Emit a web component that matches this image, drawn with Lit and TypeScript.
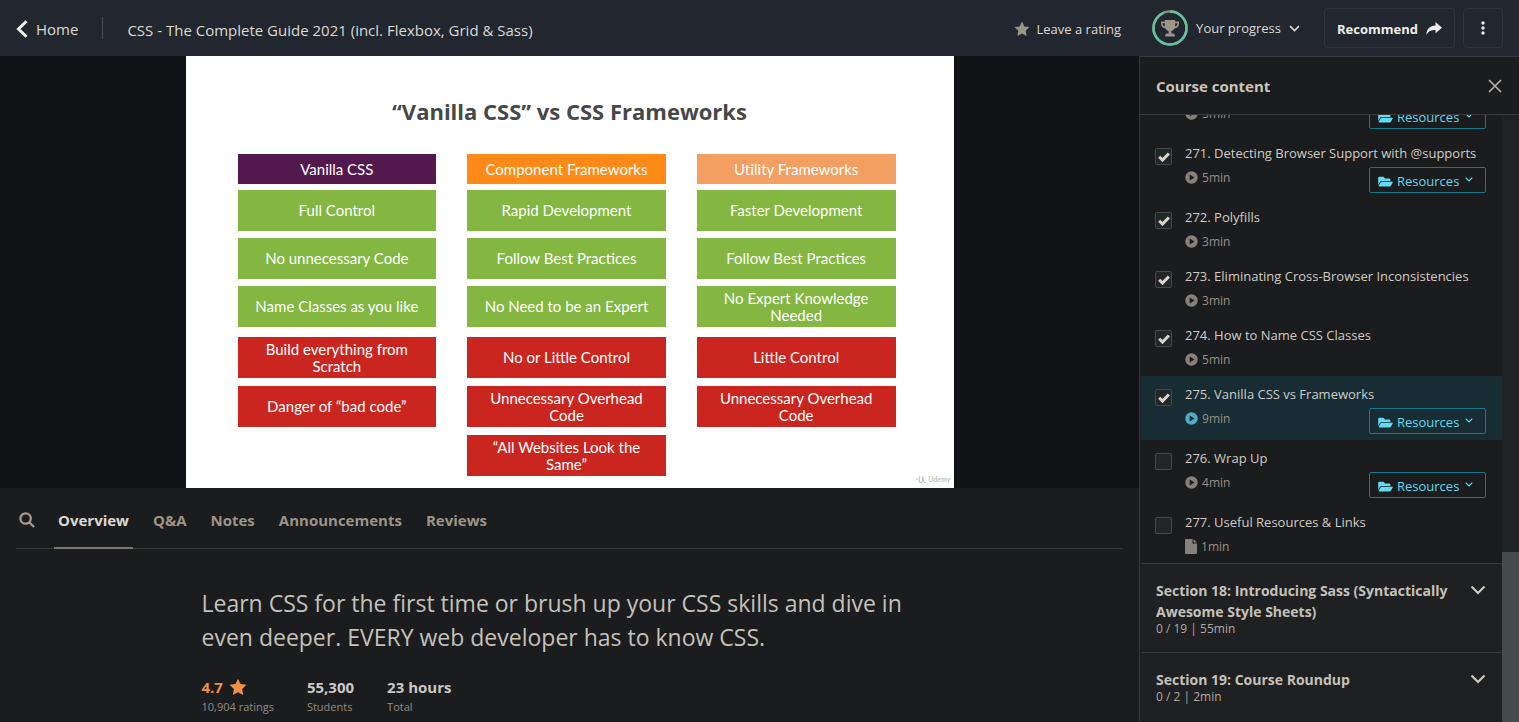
import { LitElement, html, css, svg, nothing } from "lit";
import { customElement, state, query } from "lit/decorators.js";
import { classMap } from "lit/directives/class-map.js";

interface Lecture {
  id: number;
  title?: string;
  minutes: number;
  done: boolean;
  resources?: boolean;
  article?: boolean;
}

const icon = (cls: string, box: string, body: unknown) =>
  html`<svg class=${cls} viewBox=${box} aria-hidden="true">${body}</svg>`;

const STAR = svg`<path fill="currentColor" d="M8 .6l2.3 4.8 5.2.7-3.8 3.7.9 5.3L8 12.6l-4.6 2.5.9-5.3L.5 6.1l5.2-.7z"/>`;
const chevron = (cls: string) =>
  icon(cls, "0 0 16 10", svg`<path fill="none" stroke="currentColor" stroke-width="2.2" d="M1.500 1.500L8 8l6.500-6.500"/>`);
const playIcon = () =>
  icon("play", "0 0 14 14", svg`<path fill="currentColor" fill-rule="evenodd" d="M7 .3a6.700 6.700 0 1 1 0 13.400a6.700 6.700 0 0 1 0-13.400zM5 3.900v6.200L10.300 7z"/>`);
const fileIcon = () =>
  icon("file", "0 0 12 15", svg`<path fill="currentColor" d="M0 1a1 1 0 0 1 1-1h6.500v4.500H12V14a1 1 0 0 1-1 1H1a1 1 0 0 1-1-1zM8.500 0L12 3.500H8.500z"/>`);
const folderIcon = () =>
  icon("folder", "0 0 576 512", svg`<path fill="currentColor" d="M573 295l-73 124a48 48 0 0 1-41 29H45c-18 0-30-20-20-36l73-124a48 48 0 0 1 41-24h414c18 0 29 20 20 31zM139 232h341v-48a48 48 0 0 0-48-48H272l-64-64H48a48 48 0 0 0-48 48v278l70-119a80 80 0 0 1 69-47z"/>`);

@customElement("app-root")
export class AppRoot extends LitElement {
  static styles = css`
    :host {
      display: block;
      font-family: "Open Sans", "Noto Sans", sans-serif;
      font-size: 13px;
      line-height: 20px;
      color: #dcd9d3;
      background: #1a1c1d;
    }
    * { box-sizing: border-box; }
    svg { display: block; flex: none; }
    h1, h2, h3, p, ul { margin: 0; padding: 0; }
    ul { list-style: none; }
    button { font: inherit; color: inherit; background: none; border: 0; padding: 0; cursor: pointer; }
    a { color: inherit; text-decoration: none; }

    .page { display: flex; flex-direction: column; height: 100vh; overflow: hidden; }

    .topbar {
      display: flex; align-items: center; flex: none; height: 56px;
      padding: 0 16px; background: #22272f; white-space: nowrap;
    }
    .home { display: flex; align-items: center; gap: 8px; padding-top: 2px; font-size: 15px; }
    .home-arrow { width: 12px; height: 18px; color: #efede9; }
    .divider { width: 1px; height: 22px; margin: 0 24px; background: #4a4e52; }
    .course { flex: 1; font-size: 15px; font-weight: 400; overflow: hidden; text-overflow: ellipsis; padding-top: 4px; }
    .rate { display: flex; align-items: center; gap: 7px; margin-right: 31px; padding-top: 2px; }
    .rate-star { width: 16px; height: 16px; color: #9d9588; }
    .progress { display: flex; align-items: center; gap: 8px; margin-right: 24px; }
    .ring { width: 36px; height: 36px; }
    .caret { width: 11px; height: 7px; }
    .boxed {
      display: flex; align-items: center; justify-content: center; gap: 8px;
      height: 40px; border: 1px solid #2e343b; border-radius: 4px;
      font-weight: 700; color: #efede9;
    }
    .recommend { padding: 2px 12px 0; margin-right: 8px; }
    .share { width: 16px; height: 14px; }
    .more { width: 40px; }
    .dots { width: 4px; height: 14px; }

    .body { display: flex; flex: 1; min-height: 0; }
    .main { flex: 1; min-width: 0; overflow: hidden; }

    .stage { display: flex; justify-content: center; background: #101215; }
    .slide {
      position: relative; width: 100%; max-width: 768px; aspect-ratio: 16 / 9;
      background: #fff; font-family: Lato, "Open Sans", sans-serif; font-size: 15px; line-height: 17px;
    }
    .slide-title {
      padding: 38px 0 26px; text-align: center; color: #474747;
      font-family: "Open Sans", "Noto Sans", sans-serif; font-size: 22px; line-height: 34px; font-weight: 700;
    }
    .columns { display: grid; grid-template-columns: repeat(3, 1fr); gap: 31px; padding: 0 58px 0 52px; color: #fff; }
    .col { display: flex; flex-direction: column; }
    .cell { display: flex; align-items: center; justify-content: center; text-align: center; height: 41px; padding: 0 16px; }
    .head { height: 30px; margin-bottom: 6px; font-weight: 400; font-size: 15px; }
    .vanilla { background: #53184c; }
    .component { background: #ff8a18; }
    .utility { background: #f39f62; }
    .pros { display: grid; gap: 7px; margin-bottom: 10px; }
    .pros .cell { background: #83b741; }
    .cons { display: grid; gap: 8px; }
    .cons .cell { background: #ca261f; }
    .mark { position: absolute; right: 3px; bottom: 4px; display: flex; align-items: center; gap: 2px; color: #c4c4c4; font-size: 7px; line-height: 10px; font-weight: 700; }
    .mark-logo { width: 10px; height: 9px; }

    .tabs { display: flex; gap: 16px; height: 61px; margin: 0 16px; border-bottom: 1px solid #3a3a35; }
    .search { width: 22px; display: grid; place-items: center; padding-top: 4px; }
    .search-icon { width: 16px; height: 16px; color: #a39b8e; }
    .tab { height: 61px; padding: 4px 4px 0; font-size: 15px; font-weight: 700; color: #9c9487; border-bottom: 2px solid transparent; }
    .tab.active { color: #dcd9d3; border-bottom-color: #7d766b; }

    .about { max-width: 736px; margin: 37px auto 0; }
    .lead { font-size: 23px; line-height: 34px; font-weight: 400; color: #c5c1b9; }
    .stats { display: flex; gap: 33px; margin-top: 23px; }
    .stat-value { display: flex; align-items: center; gap: 6px; font-size: 15px; line-height: 20px; font-weight: 700; color: #cdc9c2; }
    .stat-label { font-size: 11px; line-height: 20px; color: #948c80; }
    .orange { color: #ec9244; }
    .stat-star { width: 18px; height: 18px; }

    .side { display: flex; flex-direction: column; width: 380px; flex: none; border-left: 1px solid #373b3d; }
    .side-head {
      display: flex; align-items: center; justify-content: space-between; flex: none; height: 59px;
      padding: 0 17px 0 16px; border-top: 1px solid #373b3d; border-bottom: 1px solid #373b3d;
    }
    .side-title { font-size: 15px; font-weight: 700; color: #c9c5bd; }
    .close { width: 14px; height: 14px; color: #b5aea2; }
    .side-body { display: flex; flex: 1; min-height: 0; }
    .scroller { flex: 1; min-width: 0; overflow-y: auto; scrollbar-width: none; padding-left: 1px; }
    .track { display: flex; flex-direction: column; justify-content: flex-end; width: 17px; background: #1f2324; }
    .thumb { height: 170px; background: #454a4d; }

    .item { display: flex; gap: 13px; padding: 8px 16px 6px 14px; }
    .item.current { background: #172d33; }
    .tick { display: grid; flex: none; width: 17px; height: 17px; margin-top: 5px; }
    .box {
      appearance: none; grid-area: 1 / 1; width: 17px; height: 17px; margin: 0;
      background: #212627; border: 1px solid #43484a; border-radius: 2px; cursor: pointer;
    }
    .check { grid-area: 1 / 1; place-self: center; width: 12px; height: 10px; color: #d8d4cd; pointer-events: none; }
    .info { flex: 1; min-width: 0; }
    .name { display: block; min-height: 20px; margin-bottom: 4px; white-space: nowrap; color: #d0ccc5; }
    .meta { display: flex; justify-content: space-between; align-items: flex-start; }
    .time { display: flex; align-items: center; gap: 4px; font-size: 12px; line-height: 21px; color: #989084; }
    .play { width: 13px; height: 13px; color: #88817a; }
    .file { width: 12px; height: 15px; color: #88817a; }
    .current .play { color: #4eadc2; }
    .res {
      display: flex; align-items: center; width: 117px; height: 26px; padding: 2px 0 0 8px;
      border: 1px solid #147a8c; border-radius: 2px; color: #63daf2;
    }
    .folder { width: 15px; height: 13px; margin-right: 4px; }
    .res-caret { width: 8px; height: 5px; margin: 0 0 3px 6px; }

    .section { display: flex; align-items: flex-start; width: 100%; padding: 16px 16px 16px 15px; border-top: 1px solid #373b3d; background: #1e2021; text-align: left; }
    .section:last-child { padding-bottom: 24px; }
    .section-text { flex: 1; }
    .section-name { display: block; font-size: 14px; line-height: 21px; font-weight: 700; color: #c5c1b9; }
    .section-sub { display: block; font-size: 12px; line-height: 14px; color: #b0aaa0; }
    .section-caret { width: 16px; height: 10px; margin-top: 5px; color: #cdc9c2; }
  `;

  @state() private tab = "Overview";
  @state() private lectures: Lecture[] = [
    { id: 270, minutes: 5, done: true, resources: true },
    { id: 271, title: "Detecting Browser Support with @supports", minutes: 5, done: true, resources: true },
    { id: 272, title: "Polyfills", minutes: 3, done: true },
    { id: 273, title: "Eliminating Cross-Browser Inconsistencies", minutes: 3, done: true },
    { id: 274, title: "How to Name CSS Classes", minutes: 5, done: true },
    { id: 275, title: "Vanilla CSS vs Frameworks", minutes: 9, done: true, resources: true },
    { id: 276, title: "Wrap Up", minutes: 4, done: false, resources: true },
    { id: 277, title: "Useful Resources & Links", minutes: 1, done: false, article: true },
  ];
  @query(".scroller") private scroller!: HTMLElement;

  private readonly tabs = ["Overview", "Q&A", "Notes", "Announcements", "Reviews"];
  private readonly columns = [
    { cls: "vanilla", head: "Vanilla CSS", pros: ["Full Control", "No unnecessary Code", "Name Classes as you like"], cons: ["Build everything from Scratch", "Danger of “bad code”"] },
    { cls: "component", head: "Component Frameworks", pros: ["Rapid Development", "Follow Best Practices", "No Need to be an Expert"], cons: ["No or Little Control", "Unnecessary Overhead Code", "“All Websites Look the Same”"] },
    { cls: "utility", head: "Utility Frameworks", pros: ["Faster Development", "Follow Best Practices", "No Expert Knowledge Needed"], cons: ["Little Control", "Unnecessary Overhead Code"] },
  ];
  private readonly sections = [
    { name: "Section 18: Introducing Sass (Syntactically Awesome Style Sheets)", sub: "0 / 19 | 55min" },
    { name: "Section 19: Course Roundup", sub: "0 / 2 | 2min" },
  ];

  firstUpdated() {
    this.scroller.scrollTop = 44;
  }

  private toggle(id: number) {
    this.lectures = this.lectures.map((l) => (l.id === id ? { ...l, done: !l.done } : l));
  }

  private renderLecture(l: Lecture) {
    return html`<li class=${classMap({ item: true, current: l.id === 275 })}>
      <span class="tick">
        <input class="box" type="checkbox" id="l${l.id}" .checked=${l.done} @change=${() => this.toggle(l.id)} />
        ${l.done
          ? icon("check", "0 0 12 10", svg`<path fill="none" stroke="currentColor" stroke-width="3" d="M1.200 4.800l3.300 3.300L10.900 1.500"/>`)
          : nothing}
      </span>
      <div class="info">
        <label class="name" for="l${l.id}">${l.title ? `${l.id}. ${l.title}` : nothing}</label>
        <div class="meta">
          <span class="time">${l.article ? fileIcon() : playIcon()}${l.minutes}min</span>
          ${l.resources ? html`<button class="res">${folderIcon()}Resources${chevron("res-caret")}</button>` : nothing}
        </div>
      </div>
    </li>`;
  }

  render() {
    return html`<div class="page">
      <header class="topbar">
        <a class="home" href="#home">
          ${icon("home-arrow", "0 0 12 18", svg`<path fill="none" stroke="currentColor" stroke-width="3" d="M10.500 1.200L2.500 9l8 7.800"/>`)}Home
        </a>
        <span class="divider"></span>
        <h1 class="course">CSS - The Complete Guide 2021 (incl. Flexbox, Grid &amp; Sass)</h1>
        <button class="rate">${icon("rate-star", "0 0 16 16", STAR)}Leave a rating</button>
        <button class="progress">
          ${icon("ring", "0 0 36 36", svg`
            <circle cx="18" cy="18" r="16.500" fill="none" stroke="#8f877b" stroke-width="2.500"/>
            <circle cx="18" cy="18" r="16.500" fill="none" stroke="#62c39c" stroke-width="2.500" pathLength="100" stroke-dasharray="94 6" transform="rotate(-90 18 18)"/>
            <path fill="#9d9588" d="M12.800 10h10.400v1.600H27v2.200c0 2.600-2 4.400-4.500 4.700-.8 1.400-1.900 2.300-3.100 2.600v2.500h1.400c1.300 0 2 .8 2 2v.9h-9.600v-.9c0-1.200.7-2 2-2h1.400v-2.500c-1.200-.3-2.300-1.200-3.100-2.600C11 18.200 9 16.400 9 13.800v-2.200h3.800zm0 3.200h-2.200v.6c0 1.300.8 2.300 2.300 2.800-.1-1-.1-2.200-.1-3.400zm10.400 0c0 1.200 0 2.400-.1 3.400 1.500-.5 2.300-1.500 2.300-2.800v-.6z"/>`)}
          Your progress ${chevron("caret")}
        </button>
        <button class="boxed recommend">
          Recommend ${icon("share", "0 0 16 14", svg`<path fill="currentColor" d="M9.500 0L16 5.700 9.500 11.200V8C5.200 8 2.200 9.300.5 13 .2 7.500 3.700 3.600 9.500 3.400z"/>`)}
        </button>
        <button class="boxed more" aria-label="More options">
          ${icon("dots", "0 0 4 14", svg`<g fill="currentColor"><circle cx="2" cy="2" r="1.700"/><circle cx="2" cy="7" r="1.700"/><circle cx="2" cy="12" r="1.700"/></g>`)}
        </button>
      </header>

      <div class="body">
        <main class="main">
          <section class="stage">
            <div class="slide">
              <h2 class="slide-title">“Vanilla CSS” vs CSS Frameworks</h2>
              <div class="columns">
                ${this.columns.map((c) => html`<div class="col">
                  <h3 class="cell head ${c.cls}">${c.head}</h3>
                  <div class="pros">${c.pros.map((t) => html`<div class="cell">${t}</div>`)}</div>
                  <div class="cons">${c.cons.map((t) => html`<div class="cell">${t}</div>`)}</div>
                </div>`)}
              </div>
              <div class="mark">
                ${icon("mark-logo", "0 0 11 9", svg`<path fill="none" stroke="currentColor" stroke-width="1.300" d="M0 4h2M3.500 1v4.500q0 2.500 1.800 2.500T7 5.500V1l1.500 5.500Q9 8 11 8"/>`)}Udemy
              </div>
            </div>
          </section>

          <nav class="tabs" role="tablist">
            <button class="search" aria-label="Search course">
              ${icon("search-icon", "0 0 16 16", svg`<path fill="none" stroke="currentColor" stroke-width="2.300" d="M11.800 6.500a5.200 5.200 0 1 1-10.400 0a5.200 5.200 0 0 1 10.400 0zM10.300 10.300l4.700 4.700"/>`)}
            </button>
            ${this.tabs.map((t) => html`<button role="tab" aria-selected=${t === this.tab}
              class=${classMap({ tab: true, active: t === this.tab })} @click=${() => (this.tab = t)}>${t}</button>`)}
          </nav>

          <section class="about">
            <p class="lead">Learn CSS for the first time or brush up your CSS skills and dive in even deeper. EVERY web developer has to know CSS.</p>
            <div class="stats">
              <div><div class="stat-value orange">4.7 ${icon("stat-star", "0 0 16 16", STAR)}</div><div class="stat-label">10,904 ratings</div></div>
              <div><div class="stat-value">55,300</div><div class="stat-label">Students</div></div>
              <div><div class="stat-value">23 hours</div><div class="stat-label">Total</div></div>
            </div>
          </section>
        </main>

        <aside class="side">
          <div class="side-head">
            <h2 class="side-title">Course content</h2>
            <button aria-label="Close">${icon("close", "0 0 14 14", svg`<path fill="none" stroke="currentColor" stroke-width="1.700" d="M1 1l12 12M13 1L1 13"/>`)}</button>
          </div>
          <div class="side-body">
            <div class="scroller">
              <ul>${this.lectures.map((l) => this.renderLecture(l))}</ul>
              ${this.sections.map((s) => html`<button class="section" aria-expanded="false">
                <span class="section-text"><span class="section-name">${s.name}</span><span class="section-sub">${s.sub}</span></span>
                ${chevron("section-caret")}
              </button>`)}
            </div>
            <div class="track"><div class="thumb"></div></div>
          </div>
        </aside>
      </div>
    </div>`;
  }
}
